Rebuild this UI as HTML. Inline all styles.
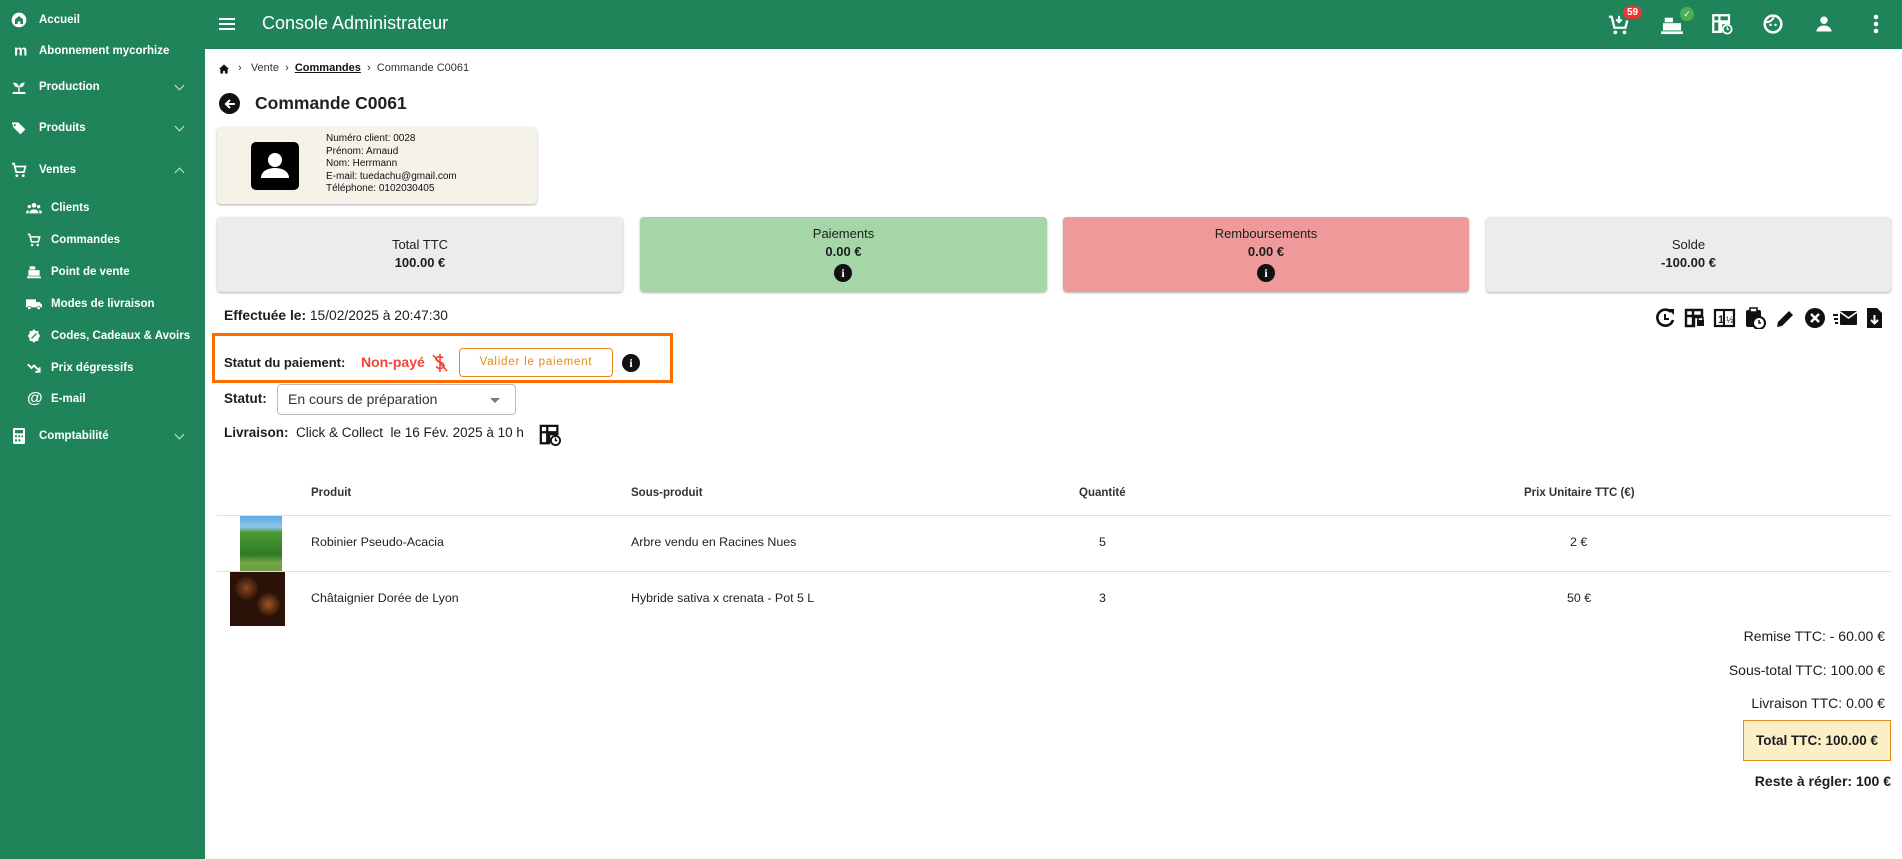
<!DOCTYPE html>
<html><head><meta charset="utf-8">
<style>
*{margin:0;padding:0;box-sizing:border-box}
body{width:1902px;height:859px;overflow:hidden;background:#fff;font-family:"Liberation Sans",sans-serif;color:#1d1d1d;position:relative}
.a{position:absolute;white-space:nowrap}
#side{position:absolute;left:0;top:0;width:205px;height:859px;background:#1f845a}
#top{position:absolute;left:205px;top:0;width:1697px;height:49px;background:#1f845a}
.si{position:absolute;color:#fff;font-size:11.5px;font-weight:bold;transform:translateY(-50%)}
.ic{position:absolute;transform:translate(-50%,-50%)}
.chev{position:absolute;left:176px;width:7px;height:7px;border-right:1.6px solid #cfe6da;border-bottom:1.6px solid #cfe6da}
.card{position:absolute;top:217px;height:75px;border-radius:4px;box-shadow:0 1px 2px rgba(0,0,0,.3);text-align:center;font-size:13px}
.card .l{position:absolute;top:9px;width:100%}
.card .v{position:absolute;top:27px;width:100%;font-weight:bold}
.info{position:absolute;width:18px;height:18px;border-radius:50%;background:#111;color:#fff;font-size:12px;font-weight:bold;text-align:center;line-height:18px;font-family:"Liberation Serif",serif}
.th{position:absolute;top:487px;font-size:11.5px;font-weight:bold;color:#333}
.td{position:absolute;font-size:12.4px;color:#222}
.hl{position:absolute;left:217px;width:1674px;height:1px;background:#e0e0e0}
.tot{position:absolute;right:17px;font-size:14px;text-align:right}
</style></head><body>
<div id="side"></div>
<div id="top"></div>

<!-- sidebar -->
<svg class="ic" style="left:19px;top:20px" width="16" height="16" viewBox="0 0 24 24"><circle cx="12" cy="12" r="11" fill="#fff"/><path d="M12 6l-6 5v7h4v-4h4v4h4v-7z" fill="#1f845a"/></svg>
<div class="si" style="left:39px;top:20px">Accueil</div>
<div class="si" style="left:14px;top:51px;font-size:15px;font-weight:900">m</div>
<div class="si" style="left:39px;top:51px;font-size:11.5px">Abonnement mycorhize</div>
<svg class="ic" style="left:19px;top:87px" width="16" height="16" viewBox="0 0 24 24"><path d="M3 20h18v2H3zM11 20v-8C8 12 5 10 4 6c4 0 7 2 7 6M13 12c0-4 3-6 7-6-1 4-4 6-7 6v8" fill="#fff" stroke="#fff" stroke-width="1"/></svg>
<div class="si" style="left:39px;top:87px">Production</div><div class="chev" style="top:82px;transform:rotate(45deg)"></div>
<svg class="ic" style="left:19px;top:128px" width="17" height="17" viewBox="0 0 24 24"><path d="M2 4h9l10 10-7 7L4 11z" fill="#fff"/><circle cx="6" cy="8" r="1.5" fill="#1f845a"/></svg>
<div class="si" style="left:39px;top:128px">Produits</div><div class="chev" style="top:123px;transform:rotate(45deg)"></div>
<svg class="ic" style="left:19px;top:170px" width="17" height="17" viewBox="0 0 24 24"><path d="M2 3h3l3 12h11l2-8H7" fill="none" stroke="#fff" stroke-width="2.5"/><circle cx="9" cy="20" r="2" fill="#fff"/><circle cx="18" cy="20" r="2" fill="#fff"/></svg>
<div class="si" style="left:39px;top:170px">Ventes</div><div class="chev" style="top:169px;transform:rotate(225deg)"></div>
<svg class="ic" style="left:34px;top:208px" width="16" height="14" viewBox="0 0 24 20"><circle cx="12" cy="6" r="3.5" fill="#fff"/><circle cx="5" cy="8" r="2.5" fill="#fff"/><circle cx="19" cy="8" r="2.5" fill="#fff"/><path d="M5 18c0-4 3-6 7-6s7 2 7 6zM0 18c0-3 2-5 4-5v5zM24 18c0-3-2-5-4-5v5z" fill="#fff"/></svg>
<div class="si" style="left:51px;top:208px">Clients</div>
<svg class="ic" style="left:34px;top:240px" width="15" height="15" viewBox="0 0 24 24"><path d="M2 3h3l3 12h11l2-8H7" fill="none" stroke="#fff" stroke-width="2.5"/><circle cx="9" cy="20" r="2" fill="#fff"/><circle cx="18" cy="20" r="2" fill="#fff"/></svg>
<div class="si" style="left:51px;top:240px">Commandes</div>
<svg class="ic" style="left:34px;top:272px" width="15" height="15" viewBox="0 0 24 24"><rect x="5" y="3" width="9" height="5" fill="#fff"/><rect x="3" y="9" width="18" height="9" fill="#fff"/><rect x="1" y="19" width="22" height="3" fill="#fff"/></svg>
<div class="si" style="left:51px;top:272px">Point de vente</div>
<svg class="ic" style="left:34px;top:304px" width="16" height="14" viewBox="0 0 24 20"><rect x="0" y="3" width="15" height="12" fill="#fff"/><path d="M15 7h5l4 4v4h-9z" fill="#fff"/><circle cx="5" cy="16" r="2.5" fill="#fff" stroke="#1f845a"/><circle cx="19" cy="16" r="2.5" fill="#fff" stroke="#1f845a"/></svg>
<div class="si" style="left:51px;top:304px">Modes de livraison</div>
<svg class="ic" style="left:34px;top:336px" width="15" height="15" viewBox="0 0 24 24"><path d="M12 1l3 3h4v4l3 4-3 4v4h-4l-3 3-3-3H5v-4l-3-4 3-4V4h4z" fill="#fff"/><path d="M8 16l8-8" stroke="#1f845a" stroke-width="2"/></svg>
<div class="si" style="left:51px;top:336px">Codes, Cadeaux &amp; Avoirs</div>
<svg class="ic" style="left:34px;top:368px" width="15" height="15" viewBox="0 0 24 24"><path d="M2 6l6 6 4-4 8 8" fill="none" stroke="#fff" stroke-width="3"/><path d="M14 18h7v-7" fill="none" stroke="#fff" stroke-width="3"/></svg>
<div class="si" style="left:51px;top:368px">Prix dégressifs</div>
<div class="si" style="left:27px;top:399px;font-size:16px">@</div>
<div class="si" style="left:51px;top:399px">E-mail</div>
<svg class="ic" style="left:19px;top:436px" width="13" height="16" viewBox="0 0 18 24"><rect x="0" y="0" width="18" height="24" rx="2" fill="#fff"/><rect x="3" y="3" width="12" height="5" fill="#1f845a"/><g fill="#1f845a"><rect x="3" y="11" width="3" height="3"/><rect x="8" y="11" width="3" height="3"/><rect x="13" y="11" width="2" height="3"/><rect x="3" y="17" width="3" height="3"/><rect x="8" y="17" width="3" height="3"/></g></svg>
<div class="si" style="left:39px;top:436px">Comptabilité</div><div class="chev" style="top:431px;transform:rotate(45deg)"></div>

<!-- top bar -->
<svg class="ic" style="left:227px;top:24px" width="16" height="12" viewBox="0 0 16 12"><path d="M0 1h16M0 6h16M0 11h16" stroke="#fff" stroke-width="2"/></svg>
<div class="a" style="left:262px;top:13px;color:#fff;font-size:18px">Console Administrateur</div>
<svg class="ic" style="left:1619px;top:25px" width="22" height="22" viewBox="0 0 24 24"><path d="M1 3h3l3 12h12l2-8" fill="none" stroke="#fff" stroke-width="2.5"/><path d="M12 2v6M9 6l3 3 3-3" stroke="#fff" stroke-width="2.2" fill="none"/><circle cx="8" cy="20" r="2" fill="#fff"/><circle cx="18" cy="20" r="2" fill="#fff"/></svg>
<div class="a" style="left:1623px;top:6px;background:#e53935;color:#fff;font-size:10px;border-radius:8px;padding:1px 4px;font-weight:bold">59</div>
<svg class="ic" style="left:1672px;top:25px" width="22" height="20" viewBox="0 0 24 22"><rect x="4" y="3" width="9" height="5" fill="#fff"/><rect x="2" y="9" width="20" height="8" fill="#fff"/><rect x="0" y="18" width="24" height="3" fill="#fff"/></svg>
<div class="a" style="left:1680px;top:7px;width:14px;height:14px;border-radius:50%;background:#4caf50;color:#fff;font-size:9px;text-align:center;line-height:14px">✓</div>
<svg class="ic" style="left:1722px;top:24px" width="21" height="21" viewBox="0 0 24 24"><path d="M2 2h18v9h-9v10H2z" fill="none" stroke="#fff" stroke-width="2.5"/><path d="M2 9h18M9 2v19" stroke="#fff" stroke-width="2.5"/><circle cx="18" cy="18" r="5" fill="#1f845a" stroke="#fff" stroke-width="2"/><path d="M18 15v3h2" stroke="#fff" stroke-width="1.5" fill="none"/></svg>
<svg class="ic" style="left:1773px;top:24px" width="20" height="20" viewBox="0 0 24 24"><circle cx="12" cy="12" r="10" fill="none" stroke="#fff" stroke-width="3"/><circle cx="9" cy="13" r="1.5" fill="#fff"/><circle cx="15" cy="13" r="1.5" fill="#fff"/><path d="M3 10c4 0 8-2 10-6" stroke="#fff" stroke-width="2.5" fill="none"/></svg>
<svg class="ic" style="left:1824px;top:24px" width="18" height="18" viewBox="0 0 24 24"><circle cx="12" cy="7" r="5" fill="#fff"/><path d="M2 22c0-5 5-8 10-8s10 3 10 8z" fill="#fff"/></svg>
<svg class="ic" style="left:1876px;top:24px" width="6" height="20" viewBox="0 0 6 20"><circle cx="3" cy="3" r="2.3" fill="#fff"/><circle cx="3" cy="10" r="2.3" fill="#fff"/><circle cx="3" cy="17" r="2.3" fill="#fff"/></svg>

<!-- breadcrumb -->
<svg class="ic" style="left:224px;top:69px" width="11" height="10" viewBox="0 0 24 22"><path d="M12 1L1 11h3v10h6v-6h4v6h6V11h3z" fill="#111"/></svg>
<div class="a" style="left:238px;top:62px;font-size:11px;color:#333">›&nbsp;&nbsp;&nbsp;Vente&nbsp;&nbsp;›&nbsp;&nbsp;<b style="text-decoration:underline;color:#111">Commandes</b>&nbsp;&nbsp;›&nbsp;&nbsp;Commande C0061</div>
<div class="a" style="left:219px;top:93px;width:21px;height:21px;border-radius:50%;background:#111"></div>
<svg class="ic" style="left:229.5px;top:103.5px" width="13" height="13" viewBox="0 0 16 16"><path d="M14 8H3M8 3L3 8l5 5" stroke="#fff" stroke-width="2.5" fill="none"/></svg>
<div class="a" style="left:255px;top:93px;font-size:17.5px;font-weight:bold;color:#222">Commande C0061</div>

<!-- client card -->
<div class="a" style="left:217px;top:127px;width:320px;height:77px;background:#f5f2ea;border-radius:4px;box-shadow:0 1px 2px rgba(0,0,0,.3)"></div>
<div class="a" style="left:251px;top:142px;width:48px;height:48px;background:#000;border-radius:5px"></div>
<svg class="ic" style="left:275px;top:166px" width="34" height="34" viewBox="0 0 34 34"><circle cx="17" cy="11" r="7" fill="#fff"/><path d="M3 29c0-7 7-10 14-10s14 3 14 10z" fill="#fff"/></svg>
<div class="a" style="left:326px;top:133px;font-size:10px;line-height:12.5px;color:#111">Numéro client: 0028<br>Prénom: Arnaud<br>Nom: Herrmann<br>E-mail: tuedachu@gmail.com<br>Téléphone: 0102030405</div>

<!-- cards -->
<div class="card" style="left:217px;width:406px;background:#ececec"><div class="l" style="top:20px">Total TTC</div><div class="v" style="top:38px">100.00 €</div></div>
<div class="card" style="left:640px;width:407px;background:#a5d6a7"><div class="l">Paiements</div><div class="v">0.00 €</div><div class="info" style="left:194px;top:47px">i</div></div>
<div class="card" style="left:1063px;width:406px;background:#ef9a9a"><div class="l">Remboursements</div><div class="v">0.00 €</div><div class="info" style="left:194px;top:47px">i</div></div>
<div class="card" style="left:1486px;width:405px;background:#ececec"><div class="l" style="top:20px">Solde</div><div class="v" style="top:38px">-100.00 €</div></div>

<div class="a" style="left:224px;top:308px;font-size:13.8px"><b>Effectuée le:</b> 15/02/2025 à 20:47:30</div>

<!-- action icons -->
<svg class="a" style="left:1654px;top:307px" width="230" height="22" viewBox="0 0 230 22" fill="#111">
<path d="M17 5A8 8 0 1 0 19 13" fill="none" stroke="#111" stroke-width="2.6"/><path d="M14 2h6v6z"/><path d="M11 7v5h4" stroke="#111" stroke-width="2" fill="none"/>
<g transform="translate(30,0)"><path d="M2 3h16v7H10v9H2z" fill="none" stroke="#111" stroke-width="2.4"/><path d="M2 9h16M9 3v16" stroke="#111" stroke-width="2.4"/><rect x="13" y="13" width="7" height="6"/><path d="M14 13v-2a2.5 2.5 0 0 1 5 0v2" stroke="#111" stroke-width="1.5" fill="none"/></g>
<g transform="translate(60,0)"><rect x="1" y="3" width="19" height="16" fill="none" stroke="#111" stroke-width="2.2"/><path d="M10 3v16" stroke="#111" stroke-width="2"/><text x="4" y="16" font-size="11" font-family="Liberation Sans" font-weight="bold">1</text><text x="12" y="16" font-size="9" font-family="Liberation Sans">½</text></g>
<g transform="translate(90,0)"><rect x="2" y="3" width="15" height="17" rx="2"/><rect x="6" y="1" width="7" height="4" fill="#fff" stroke="#111" stroke-width="1.5"/><circle cx="15" cy="16" r="6" fill="#fff" stroke="#111" stroke-width="2"/><path d="M15 13v3h2" stroke="#111" stroke-width="1.5" fill="none"/></g>
<g transform="translate(120,0)"><path d="M3 20l1-5L15 4l4 4L8 19z"/></g>
<g transform="translate(150,0)"><circle cx="11" cy="11" r="10"/><path d="M7 7l8 8M15 7l-8 8" stroke="#fff" stroke-width="2.5"/></g>
<g transform="translate(178,0)"><rect x="8" y="4" width="17" height="14" rx="1"/><path d="M8 5l8.5 6 8.5-6" stroke="#fff" stroke-width="1.6" fill="none"/><path d="M1 8h5M2 12h4M3 16h3" stroke="#111" stroke-width="2"/></g>
<g transform="translate(210,0)"><path d="M3 1h10l5 5v15H3z"/><path d="M10.5 8v8M7 13l3.5 3.5L14 13" stroke="#fff" stroke-width="2" fill="none"/></g>
</svg>

<!-- payment status -->
<div class="a" style="left:212px;top:333px;width:461px;height:50px;border:3.5px solid #ff6d00"></div>
<div class="a" style="left:224px;top:355px;font-size:13px;font-weight:bold">Statut du paiement:</div>
<div class="a" style="left:361px;top:354px;font-size:14px;font-weight:bold;color:#f44336">Non-payé</div>
<svg class="a" style="left:432px;top:354px" width="16" height="18" viewBox="0 0 16 18"><path d="M11 4c-1-1-2-1.5-3.5-1.5C5 2.5 4 4 4 5s1 2 4 3 4 2 4 3.5-1.5 3-4 3c-2 0-3-1-4-2M8 0v18M1 1l14 16" stroke="#f44336" stroke-width="1.6" fill="none"/></svg>
<div class="a" style="left:459px;top:348px;width:154px;height:29px;border:1px solid #e08a1e;border-radius:4px;color:#e08a1e;font-size:11.5px;letter-spacing:.8px;text-align:center;line-height:27px">Valider le paiement</div>
<div class="info" style="left:622px;top:354px">i</div>

<div class="a" style="left:224px;top:391px;font-size:13.5px;font-weight:bold">Statut:</div>
<div class="a" style="left:277px;top:384px;width:239px;height:31px;border:1px solid #bbb;border-radius:4px"></div>
<div class="a" style="left:288px;top:391px;font-size:14px;color:#333">En cours de préparation</div>
<div class="a" style="left:490px;top:398px;width:0;height:0;border-left:5px solid transparent;border-right:5px solid transparent;border-top:5px solid #777"></div>
<div class="a" style="left:224px;top:425px;font-size:13.5px"><b>Livraison:</b>&nbsp; Click &amp; Collect&nbsp; le 16 Fév. 2025 à 10 h</div>
<svg class="a" style="left:539px;top:424px" width="22" height="22" viewBox="0 0 24 24"><path d="M2 2h18v9h-9v10H2z" fill="none" stroke="#111" stroke-width="2.5"/><path d="M2 9h18M9 2v19" stroke="#111" stroke-width="2.5"/><circle cx="18" cy="18" r="5" fill="#fff" stroke="#111" stroke-width="2"/><path d="M18 15v3h2" stroke="#111" stroke-width="1.5" fill="none"/></svg>

<!-- table -->
<div class="th" style="left:311px">Produit</div>
<div class="th" style="left:631px">Sous-produit</div>
<div class="th" style="left:1079px">Quantité</div>
<div class="th" style="left:1524px">Prix Unitaire TTC (€)</div>
<div class="hl" style="top:515px"></div>
<div class="hl" style="top:571px"></div>
<div class="a" style="left:240px;top:516px;width:42px;height:55px;background:linear-gradient(#5ba9e0 0,#8cc7ec 20%,#4c9a34 30%,#2f7a26 70%,#72a848 85%,#6f9a4a 100%)"></div>
<div class="a" style="left:230px;top:572px;width:55px;height:54px;background:radial-gradient(circle at 30% 30%,#8a4a22 0,#3a1a0a 20%,transparent 22%),radial-gradient(circle at 70% 60%,#9a5a2a 0,#3a1a0a 22%,transparent 24%),#2a1208"></div>
<div class="td" style="left:311px;top:535px">Robinier Pseudo-Acacia</div>
<div class="td" style="left:631px;top:535px">Arbre vendu en Racines Nues</div>
<div class="td" style="left:1099px;top:535px">5</div>
<div class="td" style="left:1570px;top:535px">2 €</div>
<div class="td" style="left:311px;top:591px">Châtaignier Dorée de Lyon</div>
<div class="td" style="left:631px;top:591px">Hybride sativa x crenata - Pot 5 L</div>
<div class="td" style="left:1099px;top:591px">3</div>
<div class="td" style="left:1567px;top:591px">50 €</div>

<div class="tot" style="top:628px">Remise TTC: - 60.00 €</div>
<div class="tot" style="top:662px">Sous-total TTC: 100.00 €</div>
<div class="tot" style="top:695px">Livraison TTC: 0.00 €</div>
<div class="a" style="left:1743px;top:720px;width:148px;height:41px;background:#fbefc8;border:1px solid #e0901a;font-size:13.5px;font-weight:bold;text-align:center;line-height:39px">Total TTC: 100.00 €</div>
<div class="tot" style="top:773px;font-weight:bold;right:11px">Reste à régler: 100 €</div>
</body></html>
